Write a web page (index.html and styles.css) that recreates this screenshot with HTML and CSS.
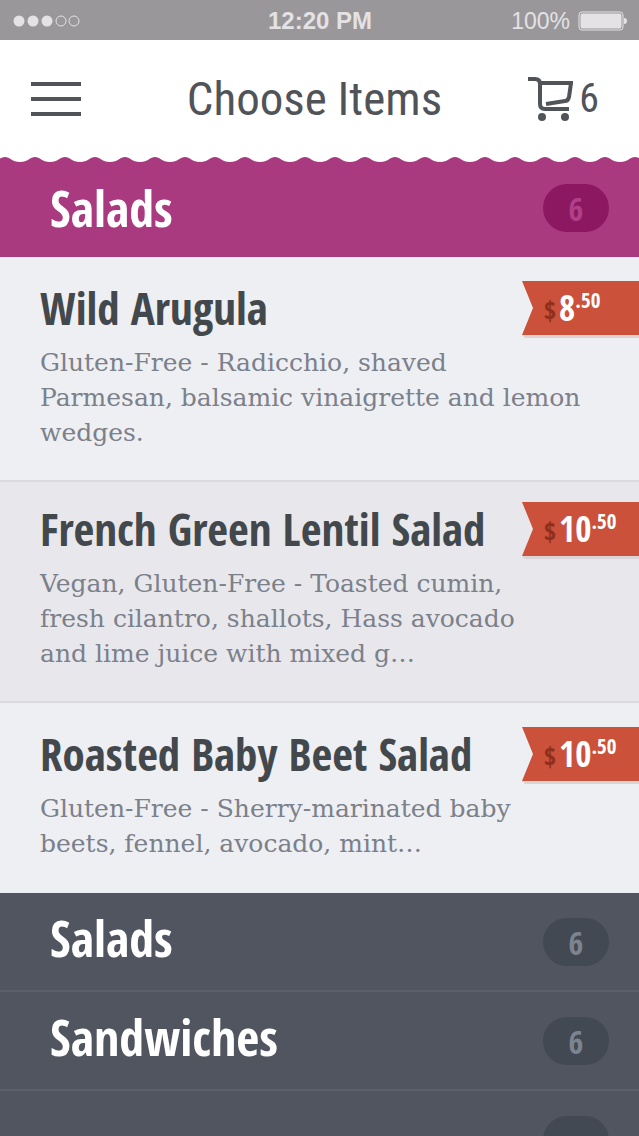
FILE: index.html
```html
<!DOCTYPE html>
<html lang="en">
<head>
  <meta charset="UTF-8">
  <meta name="viewport" content="width=device-width, initial-scale=1.0">
  <title>Choose Items</title>
  <link rel="stylesheet" href="styles.css">
</head>
<body>
  <div class="status">
    <svg class="signal" width="68" height="14" viewBox="0 0 68 14" aria-hidden="true">
      <circle cx="7" cy="7" r="5.5"/>
      <circle cx="21" cy="7" r="5.5"/>
      <circle cx="35" cy="7" r="5.5"/>
      <circle class="off" cx="49" cy="7" r="5"/>
      <circle class="off" cx="62" cy="7" r="5"/>
    </svg>
    <span class="time">12:20 PM</span>
    <span class="battery">
      100%
      <svg width="50" height="20" viewBox="0 0 50 20" aria-hidden="true">
        <rect class="case" x="1" y="1" width="44" height="18" rx="3"/>
        <rect x="2.5" y="2.5" width="41" height="15" rx="2"/>
        <path d="M46 7q3 0 3 3t-3 3z"/>
      </svg>
    </span>
  </div>

  <header class="topbar">
    <button class="menu" type="button" aria-label="Menu">
      <svg width="52" height="36" viewBox="0 0 52 36" aria-hidden="true">
        <path d="M1 3h50M1 18h50M1 33h50"/>
      </svg>
    </button>
    <h1>Choose Items</h1>
    <a class="cart" href="#" aria-label="Cart, 6 items">
      <svg width="46" height="46" viewBox="0 0 46 46" aria-hidden="true">
        <path d="M1 3h7q5 0 5 5v20q0 5 5 5h24M13 7h31l-2 14q-1 4-4 4l-19 3"/>
        <circle cx="15" cy="41" r="4"/>
        <circle cx="38" cy="41" r="4"/>
      </svg>
      <span>6</span>
    </a>
  </header>

  <main>
    <section class="open">
      <svg class="wave" width="100%" height="6" aria-hidden="true">
        <defs>
          <pattern id="scallop" width="30" height="6" patternUnits="userSpaceOnUse" x="5">
            <path d="M0 0H30C25 0 23 5 15 5S5 0 0 0z"/>
          </pattern>
        </defs>
        <rect width="100%" height="6" fill="url(#scallop)"/>
      </svg>
      <h2><button class="category" type="button">Salads <span class="count">6</span></button></h2>
      <ul class="items">
        <li class="item">
          <div class="item-head">
            <h3>Wild Arugula</h3>
            <span class="price"><small>$</small>8<sup>.50</sup></span>
          </div>
          <p>Gluten-Free - Radicchio, shaved<br>Parmesan, balsamic vinaigrette and lemon<br>wedges.</p>
        </li>
        <li class="item">
          <div class="item-head">
            <h3>French Green Lentil Salad</h3>
            <span class="price"><small>$</small>10<sup>.50</sup></span>
          </div>
          <p>Vegan, Gluten-Free - Toasted cumin,<br>fresh cilantro, shallots, Hass avocado<br>and lime juice with mixed g…</p>
        </li>
        <li class="item">
          <div class="item-head">
            <h3>Roasted Baby Beet Salad</h3>
            <span class="price"><small>$</small>10<sup>.50</sup></span>
          </div>
          <p>Gluten-Free - Sherry-marinated baby<br>beets, fennel, avocado, mint…</p>
        </li>
      </ul>
    </section>

    <section class="closed">
      <h2><button class="category" type="button">Salads <span class="count">6</span></button></h2>
      <h2><button class="category" type="button">Sandwiches <span class="count">6</span></button></h2>
      <h2><button class="category" type="button" aria-label="More"><span class="count"></span></button></h2>
    </section>
  </main>
</body>
</html>
```
FILE: styles.css
```css
* {
  box-sizing: border-box;
}
html, body {
  height: 100%;
}
body {
  margin: 0;
  overflow: hidden;
  background: #50555f;
  color: #43484d;
  font-family: "Open Sans Condensed", "Noto Sans Condensed", "Liberation Sans Narrow", sans-serif;
}
h1, h2, h3, p, ul {
  margin: 0;
  padding: 0;
}
ul {
  list-style: none;
}
button {
  border: 0;
  padding: 0;
  background: none;
  color: inherit;
  font: inherit;
  cursor: pointer;
}
svg {
  display: block;
}

/* status bar */
.status {
  display: grid;
  grid-template-columns: 1fr auto 1fr;
  align-items: center;
  height: 40px;
  padding: 2px 11px 0 12px;
  background: #9a979a;
  color: #e4e2e4;
  font-family: "Liberation Sans", Arial, sans-serif;
  font-size: 24px;
}
.status svg {
  fill: #e4e2e4;
}
.status .off, .status .case {
  fill: none;
  stroke: #e4e2e4;
  stroke-width: 1;
}
.time {
  font-weight: bold;
}
.battery {
  display: flex;
  align-items: center;
  justify-content: flex-end;
  gap: 8px;
  font-size: 23px;
}

/* top bar */
.topbar {
  display: grid;
  grid-template-columns: 1fr auto 1fr;
  align-items: center;
  height: 117px;
  padding: 0 40px 0 30px;
  background: #fff;
  color: #505459;
  font-family: "Roboto Condensed", "Liberation Sans Narrow", sans-serif;
}
.menu {
  justify-self: start;
}
.menu path {
  stroke: #505459;
  stroke-width: 4;
}
h1 {
  font-size: 47px;
  font-weight: normal;
}
.cart {
  display: flex;
  align-items: center;
  justify-self: end;
  gap: 6px;
  color: inherit;
  font-size: 40px;
  text-decoration: none;
}
.cart path {
  fill: none;
  stroke: #505459;
  stroke-width: 4;
}
.cart circle {
  fill: #505459;
}

/* categories */
.category {
  display: flex;
  align-items: center;
  justify-content: space-between;
  width: 100%;
  height: 99px;
  padding: 0 30px 4px 50px;
  color: #fff;
  font-size: 50px;
  font-weight: bold;
  line-height: 60px;
  text-align: left;
}
.count {
  width: 66px;
  height: 48px;
  margin-left: auto;
  border-radius: 24px;
  font-size: 32px;
  line-height: 50px;
  text-align: center;
}
.wave {
  background: #a93a80;
  fill: #fff;
}
.open .category {
  height: 94px;
  background: #a93a80;
}
.open .count {
  background: #8d1862;
  color: #b04088;
}
.closed .category {
  padding-bottom: 8px;
  border-bottom: 2px solid #5a5f6a;
}
.closed .count {
  margin-top: 8px;
  background: #434953;
  color: #7c8490;
}

/* items */
.item {
  padding: 24px 0 30px 40px;
  background: #eeeff3;
  border-bottom: 2px solid #dbdbdf;
}
.item:nth-child(even) {
  padding-top: 20px;
  background: #e8e8ec;
}
.item:last-child {
  padding-bottom: 32px;
  border-bottom: 0;
}
.item-head {
  display: flex;
  justify-content: space-between;
  height: 54px;
}
h3 {
  font-size: 45px;
  font-weight: bold;
  line-height: 54px;
  white-space: nowrap;
}
.item p {
  margin-top: 10px;
  color: #7b808a;
  font-family: "DejaVu Serif", serif;
  font-size: 25px;
  line-height: 35px;
  white-space: nowrap;
}
.price {
  flex: none;
  width: 117px;
  height: 57px;
  padding-left: 22px;
  background: linear-gradient(#cb513a 54px, #dcd3d4 54px);
  clip-path: polygon(0 0, 100% 0, 100% 100%, 3px 100%, 0 54px, 11px 27px);
  color: #fff;
  font-size: 35px;
  font-weight: bold;
  line-height: 54px;
}
.price small {
  margin-right: 3px;
  color: #8f2f1c;
  font-size: 26px;
}
.price sup {
  font-size: 21px;
  line-height: 1;
}
```
